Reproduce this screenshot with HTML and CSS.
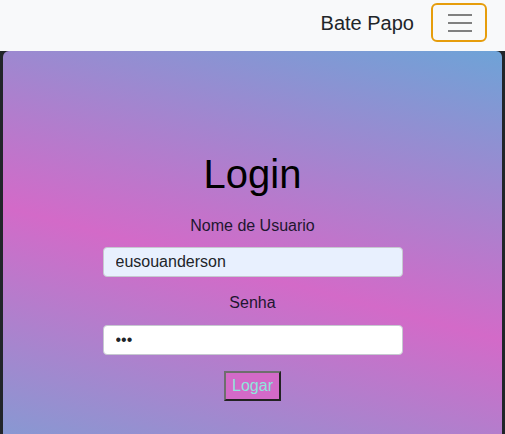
FILE: index.html
```html
<!DOCTYPE html>
<html lang="pt">
<head>
<meta charset="utf-8">
<title>Bate Papo</title>
<link rel="stylesheet" href="styles.css">
</head>
<body>
<nav class="navbar">
  <span class="brand">Bate Papo</span>
  <button class="toggler" type="button" aria-label="Menu">
    <svg class="toggler-icon" viewBox="0 0 30 30" width="30" height="30">
      <path d="M4 7h24M4 15h24M4 23h24" stroke="#808080" stroke-width="2" stroke-linecap="butt" fill="none"/>
    </svg>
  </button>
</nav>
<main class="card">
  <form class="login">
    <h1 class="title">Login</h1>
    <label class="label" for="user">Nome de Usuario</label>
    <input class="field field-filled" id="user" type="text" value="eusouanderson">
    <label class="label label-pass" for="pass">Senha</label>
    <input class="field" id="pass" type="password" value="123">
    <button class="submit" type="button">Logar</button>
  </form>
</main>
</body>
</html>
```
FILE: styles.css
```css
html, body {
  margin: 0;
  padding: 0;
}
body {
  background: #212529;
  font-family: "Liberation Sans", Arial, sans-serif;
  color: #212529;
  height: 434px;
  overflow: hidden;
  display: flex;
  flex-direction: column;
}
.navbar {
  background: #f8f9fa;
  height: 51px;
  box-sizing: border-box;
  display: flex;
  justify-content: flex-end;
  align-items: flex-start;
  padding: 3px 18px 0 0;
  gap: 17px;
}
.brand {
  font-size: 20px;
  line-height: 30px;
  margin-top: 5px;
  color: #212529;
}
.toggler {
  width: 56px;
  height: 39px;
  box-sizing: border-box;
  border: 2px solid #e69d0c;
  border-radius: 6px;
  background: transparent;
  padding: 0;
  display: flex;
  align-items: center;
  justify-content: center;
}
.toggler-icon {
  display: block;
  margin-top: 0;
}
.card {
  flex: 1;
  margin: 0 3px;
  border-radius: 6px 6px 0 0;
  background: linear-gradient(195deg, #6ea3d7 0%, #d36ac8 56%, #8898d2 100%);
  padding-top: 99px;
}
.login {
  display: flex;
  flex-direction: column;
  align-items: center;
}
.title {
  margin: 0;
  font-size: 40px;
  font-weight: 400;
  line-height: 48px;
  color: #000;
}
.label {
  display: block;
  font-size: 16px;
  line-height: 24px;
  margin-top: 16px;
  margin-bottom: 9px;
  color: #1e1630;
}
.label-pass {
  margin-top: 14px;
  margin-bottom: 10px;
}
.field {
  width: 300px;
  height: 30px;
  box-sizing: border-box;
  border: 1px solid #c6c8d0;
  border-radius: 4px;
  padding: 0 12px;
  font-family: "Liberation Sans", Arial, sans-serif;
  font-size: 16px;
  color: #212529;
  background: #fff;
  outline: none;
}
.field-filled {
  background: #e8f0fe;
}
.submit {
  margin-top: 16px;
  height: 30px;
  box-sizing: border-box;
  padding: 0 6px;
  font-family: "Liberation Sans", Arial, sans-serif;
  font-size: 16px;
  color: #8ee6dc;
  background: #d36ac8;
  border-style: solid;
  border-width: 2px;
  border-color: #6e6e6e #222 #222 #6e6e6e;
}
```
